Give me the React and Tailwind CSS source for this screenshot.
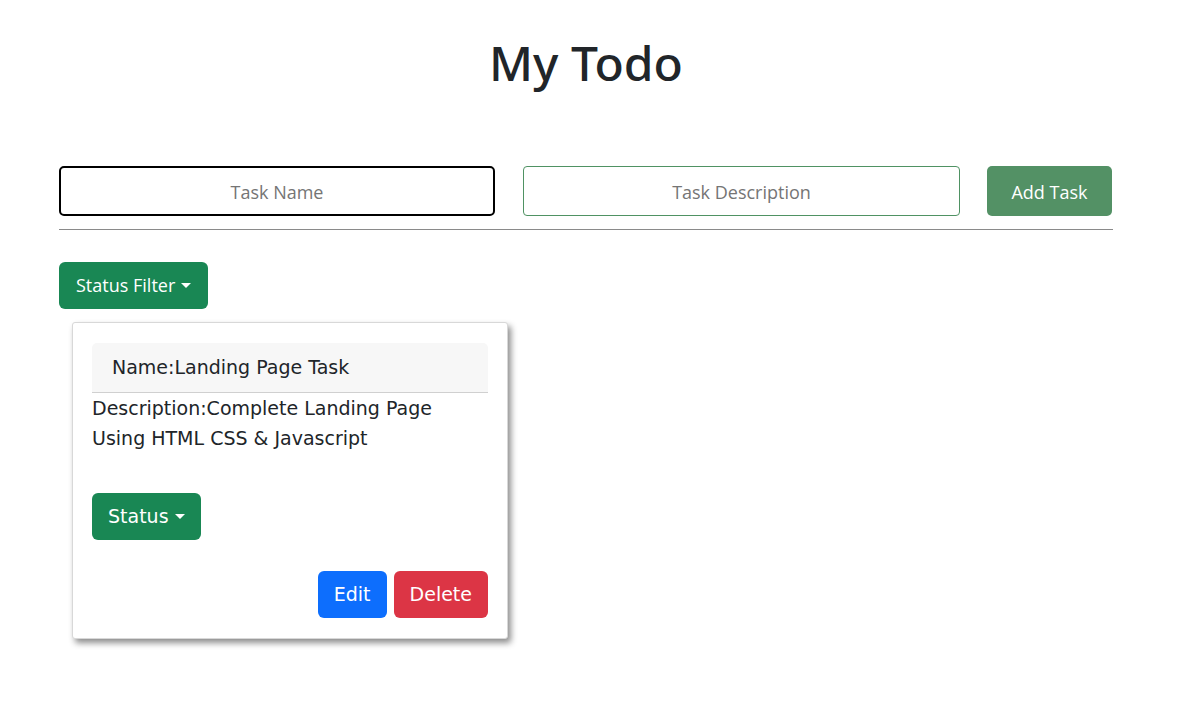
import React from 'react';

const ui = { fontFamily: '"Open Sans", "Noto Sans", sans-serif' };
const titleFont = { fontFamily: '"Noto Sans", "Open Sans", sans-serif' };
const cardFont = { fontFamily: '"DejaVu Sans", "Noto Sans", sans-serif' };

function Caret() {
  return <span className="ml-1.5 inline-block h-0 w-0 border-x-[5px] border-t-[5px] border-x-transparent border-t-white align-middle" />;
}

function TaskCard() {
  return (
    <div className="w-[436px] rounded-[3px] border border-[#d8d8d8] bg-white px-[19px] pt-5 pb-5 shadow-[3px_4px_6px_rgba(0,0,0,0.45)]" style={cardFont}>
      <div className="flex h-[50px] items-center rounded-t-[5px] border-b border-[#d0d0d0] bg-[#f7f7f7] px-5 text-[19px] text-[#212529]">
        Name:Landing Page Task
      </div>
      <p className="text-[19px] leading-[30px] text-[#212529]">
        Description:Complete Landing Page Using HTML CSS &amp; Javascript
      </p>
      <button className="mt-[40px] flex h-[47px] items-center rounded-[6px] bg-[#198754] px-4 text-[19px] text-white">
        Status<Caret />
      </button>
      <div className="mt-[31px] flex justify-end gap-[7px]">
        <button className="h-[47px] rounded-[6px] bg-[#0d6efd] px-4 text-[19px] text-white">Edit</button>
        <button className="h-[47px] rounded-[6px] bg-[#dc3545] px-4 text-[19px] text-white">Delete</button>
      </div>
    </div>
  );
}

export default function App() {
  return (
    <div className="min-h-[701px] bg-white px-[59px] text-[#212529]" style={ui}>
      <h1 className="pt-[29px] pr-[14px] text-center text-[48px] font-medium leading-[68px]" style={titleFont}>My Todo</h1>
      <div className="mt-[69px] flex items-center">
        <input
          placeholder="Task Name"
          className="h-[50px] w-[436px] rounded-[5px] border-2 border-black bg-white pt-[2px] text-center text-[18px] outline-none placeholder:text-[#757575]"
        />
        <input
          placeholder="Task Description"
          className="ml-[28px] h-[50px] w-[437px] rounded-[4px] border border-[#4f9263] bg-white pt-[2px] text-center text-[18px] outline-none placeholder:text-[#757575]"
        />
        <button className="ml-[27px] h-[50px] w-[125px] rounded-[5px] bg-[#539165] pt-[2px] text-[18px] text-white">Add Task</button>
      </div>
      <hr className="mt-[13px] w-[1054px] border-t border-[#8a8a8a]" />
      <button className="mt-[32px] flex h-[47px] items-center rounded-[6px] bg-[#198754] px-[17px] text-[18px] text-white">
        Status Filter<Caret />
      </button>
      <div className="ml-[13px] mt-[13px]">
        <TaskCard />
      </div>
    </div>
  );
}
